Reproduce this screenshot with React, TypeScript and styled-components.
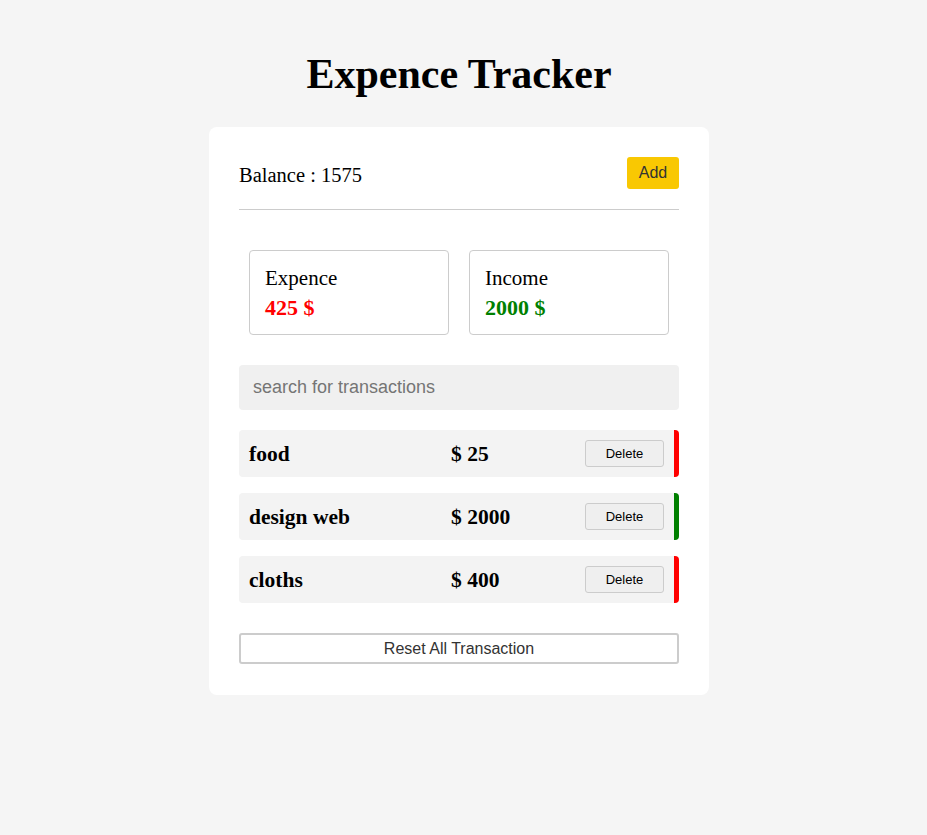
import React from "react";
import styled, { createGlobalStyle } from "styled-components";

const Global = createGlobalStyle`
  html, body { margin: 0; padding: 0; }
  body {
    background: #f5f5f5;
    font-family: "Liberation Serif", "DejaVu Serif", serif;
    color: #000;
  }
  * { box-sizing: border-box; }
`;

const Page = styled.div`
  display: flex;
  flex-direction: column;
  align-items: center;
  padding: 48px 9px 0 0;
`;

const Title = styled.h1`
  margin: 0 0 27px;
  font-size: 42px;
  line-height: 52px;
  font-weight: 700;
`;

const Card = styled.div`
  width: 500px;
  background: #fff;
  border-radius: 8px;
  padding: 30px;
  display: flex;
  flex-direction: column;
`;

const BalanceRow = styled.div`
  display: flex;
  justify-content: space-between;
  align-items: center;
  padding-bottom: 20px;
  border-bottom: 1px solid #ccc;
`;

const Balance = styled.div`
  font-size: 20.5px;
  padding-top: 4px;
`;

const AddButton = styled.button`
  width: 52px;
  height: 32px;
  background: #f9c802;
  border: none;
  border-radius: 3px;
  font-family: "Liberation Sans", Arial, sans-serif;
  font-size: 16px;
  color: #333;
  padding: 0;
`;

const Summary = styled.div`
  display: flex;
  gap: 20px;
  padding: 0 10px;
  margin: 40px 0 30px;
`;

const SummaryBox = styled.div`
  flex: 1;
  height: 85px;
  border: 1px solid #ccc;
  border-radius: 4px;
  padding: 16px 15px;
  display: flex;
  flex-direction: column;
  gap: 6px;
`;

const SummaryLabel = styled.div`
  font-size: 21px;
  line-height: 23px;
`;

const SummaryValue = styled.div<{ $color: string }>`
  font-size: 22px;
  line-height: 24px;
  font-weight: 700;
  color: ${(p) => p.$color};
`;

const Search = styled.input`
  width: 100%;
  height: 45px;
  border: none;
  border-radius: 4px;
  background: #f0f0f0;
  padding: 0 14px;
  font-family: "Liberation Sans", Arial, sans-serif;
  font-size: 18px;
  outline: none;
  &::placeholder { color: #757575; }
`;

const List = styled.div`
  display: flex;
  flex-direction: column;
  gap: 16px;
  margin: 20px 0 30px;
`;

const Row = styled.div<{ $color: string }>`
  height: 47px;
  display: grid;
  grid-template-columns: 202px 1fr auto;
  align-items: center;
  background: #f3f3f3;
  border-radius: 4px;
  border-right: 5px solid ${(p) => p.$color};
  padding: 0 10px;
`;

const Cell = styled.div`
  font-size: 21.5px;
  font-weight: 700;
  padding-top: 2px;
`;

const DeleteButton = styled.button`
  width: 79px;
  height: 27px;
  background: #efefef;
  border: 1px solid #ccc;
  border-radius: 3px;
  font-family: "Liberation Sans", Arial, sans-serif;
  font-size: 13px;
  color: #000;
  padding: 0;
`;

const ResetButton = styled.button`
  width: 100%;
  height: 31px;
  margin-bottom: 1px;
  background: #fff;
  border: 2px solid #ccc;
  border-radius: 3px;
  font-family: "Liberation Sans", Arial, sans-serif;
  font-size: 16px;
  color: #333;
  padding: 0;
`;

const transactions = [
  { name: "food", amount: 25, color: "#ff0000" },
  { name: "design web", amount: 2000, color: "#008000" },
  { name: "cloths", amount: 400, color: "#ff0000" },
];

export default function App() {
  return (
    <>
      <Global />
      <Page>
        <Title>Expence Tracker</Title>
        <Card>
          <BalanceRow>
            <Balance>Balance : 1575</Balance>
            <AddButton>Add</AddButton>
          </BalanceRow>
          <Summary>
            <SummaryBox>
              <SummaryLabel>Expence</SummaryLabel>
              <SummaryValue $color="#ff0000">425 $</SummaryValue>
            </SummaryBox>
            <SummaryBox>
              <SummaryLabel>Income</SummaryLabel>
              <SummaryValue $color="#008000">2000 $</SummaryValue>
            </SummaryBox>
          </Summary>
          <Search placeholder="search for transactions" />
          <List>
            {transactions.map((t) => (
              <Row key={t.name} $color={t.color}>
                <Cell>{t.name}</Cell>
                <Cell>$ {t.amount}</Cell>
                <DeleteButton>Delete</DeleteButton>
              </Row>
            ))}
          </List>
          <ResetButton>Reset All Transaction</ResetButton>
        </Card>
      </Page>
    </>
  );
}
